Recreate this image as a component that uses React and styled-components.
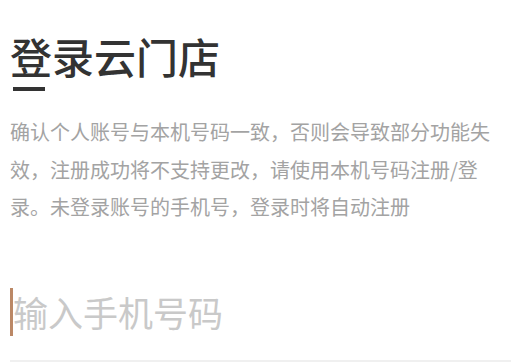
import React from "react";
import styled, { createGlobalStyle } from "styled-components";

const GlobalStyle = createGlobalStyle`
  html, body {
    margin: 0;
    padding: 0;
    background: #fff;
  }
  body {
    font-family: "Noto Sans CJK SC", "Noto Sans", sans-serif;
  }
`;

const Page = styled.div`
  width: 528px;
  height: 362px;
  box-sizing: border-box;
  padding: 35px 17px 0 10px;
  overflow: hidden;
`;

const Title = styled.h1`
  margin: 0;
  font-size: 42px;
  line-height: 42px;
  font-weight: 500;
  color: #333;
  letter-spacing: 0;
`;

const TitleBar = styled.div`
  width: 32px;
  height: 4px;
  margin: 10px 0 0 3px;
  background: #333;
`;

const Notice = styled.p`
  margin: 22px 0 0;
  font-size: 20px;
  line-height: 37.5px;
  color: #a3a3a3;
`;

const InputRow = styled.label`
  display: flex;
  align-items: center;
  margin-top: 62px;
  padding-bottom: 24px;
  border-bottom: 2px solid #f0f0f0;
`;

const Caret = styled.span`
  flex: none;
  width: 3px;
  height: 48px;
  background: #bb8866;
`;

const PhoneInput = styled.input`
  flex: 1;
  min-width: 0;
  border: none;
  outline: none;
  padding: 0;
  margin: 0;
  background: transparent;
  font-family: inherit;
  font-size: 35px;
  line-height: 48px;
  height: 48px;
  color: #333;
  caret-color: transparent;

  &::placeholder {
    color: #c9c9c9;
  }
`;

export default function App() {
  return (
    <Page>
      <GlobalStyle />
      <Title>登录云门店</Title>
      <TitleBar />
      <Notice>
        确认个人账号与本机号码一致，否则会导致部分功能失效，注册成功将不支持更改，请使用本机号码注册/登录。未登录账号的手机号，登录时将自动注册
      </Notice>
      <InputRow>
        <Caret />
        <PhoneInput type="tel" placeholder="输入手机号码" />
      </InputRow>
    </Page>
  );
}
